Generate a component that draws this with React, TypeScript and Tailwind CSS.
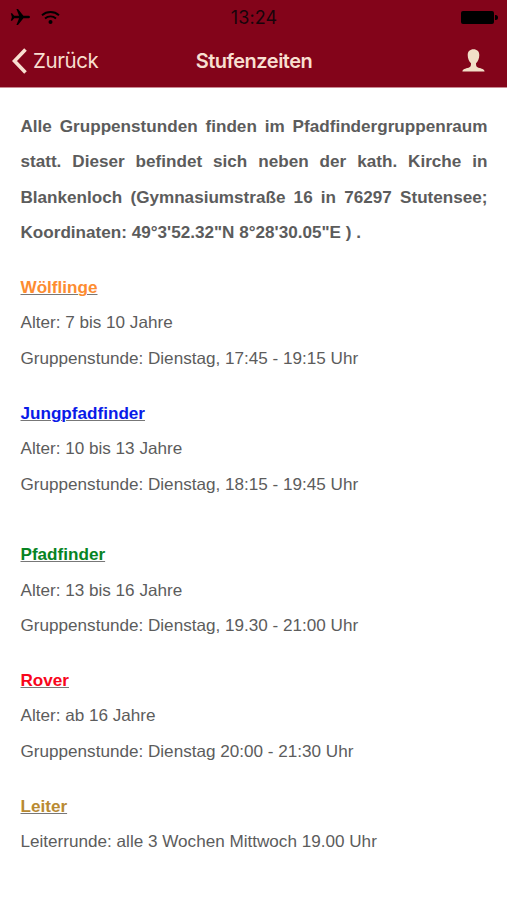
type Stage = { name: string; color: string; lines: string[]; gap: string };

const stages: Stage[] = [
  { name: 'Wölflinge', color: 'text-[#fd8c30]', gap: 'mt-[20px]', lines: ['Alter: 7 bis 10 Jahre', 'Gruppenstunde: Dienstag, 17:45 - 19:15 Uhr'] },
  { name: 'Jungpfadfinder', color: 'text-[#0a1be8]', gap: 'mt-[20px]', lines: ['Alter: 10 bis 13 Jahre', 'Gruppenstunde: Dienstag, 18:15 - 19:45 Uhr'] },
  { name: 'Pfadfinder', color: 'text-[#078423]', gap: 'mt-[35.3px]', lines: ['Alter: 13 bis 16 Jahre', 'Gruppenstunde: Dienstag, 19.30 - 21:00 Uhr'] },
  { name: 'Rover', color: 'text-[#f8061c]', gap: 'mt-[20px]', lines: ['Alter: ab 16 Jahre', 'Gruppenstunde: Dienstag 20:00 - 21:30 Uhr'] },
  { name: 'Leiter', color: 'text-[#b98a32]', gap: 'mt-[20px]', lines: ['Leiterrunde: alle 3 Wochen Mittwoch 19.00 Uhr'] },
];

function StatusBar() {
  return (
    <div className="grid h-[34px] grid-cols-3 items-center pl-[10px] pr-[9px] text-black">
      <div className="flex items-center gap-[10px]">
        <svg width="21" height="18" viewBox="0 0 21 18" fill="currentColor">
          <path d="M20 9c0-.8-.9-1.300-2-1.300h-4.600L8 1H6.400l2.700 6.700H4.200L2.100 5.300H.8L1.900 9 .8 12.700h1.300l2.100-2.400h4.900L6.400 17H8l5.400-6.700H18c1.100 0 2-.5 2-1.300z" />
        </svg>
        <svg width="19" height="15" viewBox="0 0 19 15" fill="none" stroke="currentColor" strokeWidth="1.900">
          <path d="M1 5.200c4.800-4.300 12.200-4.300 17 0M4 8.500c3.200-2.800 7.800-2.800 11 0" />
          <circle cx="9.500" cy="12" r="2" fill="currentColor" stroke="none" />
        </svg>
      </div>
      <span className="pt-px text-center text-[18px] leading-none tracking-[0.1px] text-[#17040a]">13:24</span>
      <div className="flex items-center justify-end gap-[1.500px]">
        <div className="h-[13px] w-[32.500px] rounded-[2px] bg-black" />
        <div className="h-[5px] w-[3px] rounded-r-full bg-black" />
      </div>
    </div>
  );
}

function NavBar() {
  return (
    <div className="grid h-[53px] grid-cols-3 items-center pl-[12px] pr-[22px] text-[#f8dfd0]">
      <div className="flex items-center gap-[7px]">
        <svg width="15" height="26" viewBox="0 0 15 26" fill="none" stroke="currentColor" strokeWidth="3.600">
          <path d="M13.500 1.500 2.500 13l11 11.500" />
        </svg>
        <span className="-ml-px pt-[2px] text-[20.500px] leading-none tracking-[-0.4px]">Zurück</span>
      </div>
      <h1 className="pl-[11px] text-center text-[20px] font-semibold leading-none tracking-[-0.500px]">Stufenzeiten</h1>
      <svg className="justify-self-end text-[#f2dfc8]" width="23" height="23" viewBox="0 0 23 23" fill="currentColor">
        <path d="M11.500.3C8 .3 5.700 2.500 5.700 6c0 3.600 1.300 6.600 3.300 8.300 0 2.600-.3 3.800-2.400 4.400-3.200.9-6 1.300-6.200 3.900h22.200c-.2-2.600-3-3-6.200-3.900-2.100-.6-2.400-1.800-2.400-4.400 2-1.700 3.300-4.700 3.300-8.300 0-3.500-2.300-5.700-5.800-5.700z" />
      </svg>
    </div>
  );
}

export default function App() {
  return (
    <div className="h-[900px] overflow-hidden bg-white font-['Liberation_Sans',Arial,sans-serif]">
      <header className="h-[88px] border-b border-[#c98a93] bg-[#83041a] font-[Inter,sans-serif]">
        <StatusBar />
        <NavBar />
      </header>
      <main className="px-[20.500px] pt-[21px] text-[17.110px] leading-[35.300px] text-[#5c5c5c]">
        <p className="w-[467px] text-justify font-bold">
          Alle Gruppenstunden finden im Pfadfindergruppenraum statt. Dieser befindet sich neben der kath. Kirche in
          Blankenloch (Gymnasiumstraße 16 in 76297 Stutensee; Koordinaten: 49°3'52.32"N 8°28'30.05"E ) .
        </p>
        {stages.map((s) => (
          <section key={s.name} className={s.gap}>
            <h2 className="font-bold underline decoration-[#777] decoration-1">
              <span className={s.color}>{s.name}</span>
            </h2>
            {s.lines.map((l) => (
              <p key={l} className="whitespace-nowrap">{l}</p>
            ))}
          </section>
        ))}
      </main>
    </div>
  );
}
